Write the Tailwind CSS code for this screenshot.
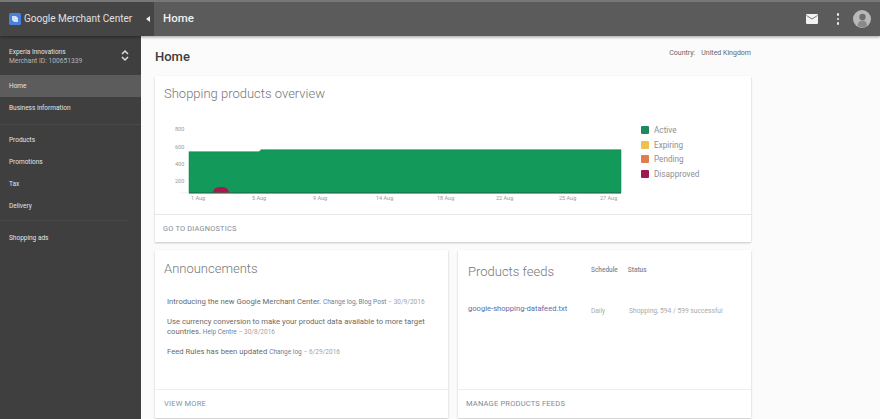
<!DOCTYPE html>
<html>
<head>
<meta charset="utf-8">
<script src="https://cdn.jsdelivr.net/npm/@tailwindcss/browser@4"></script>
</head>
<body class="m-0 bg-[#fbfbfb]">
<div class="w-[880px] h-[419px] overflow-hidden flex flex-col font-[Roboto,sans-serif] antialiased">
  <header class="h-[36px] shrink-0 flex items-center bg-[#5b5b5b] border-t-2 border-[#777] shadow-[0_1px_3px_rgba(0,0,0,0.4)] relative z-10">
    <div class="w-[154px] h-full flex items-center bg-[#454545] pl-[9px]">
      <svg class="w-[12px] h-[12px] shrink-0" viewBox="0 0 12 12"><rect width="12" height="12" rx="1.500" fill="#4a80d8"/><path d="M3 3h4l2 2v4H5L3 7z" fill="#cfe0fa"/></svg>
      <span class="ml-[3px] text-[10px] text-[#e0e0e0] whitespace-nowrap leading-none">Google Merchant Center</span>
      <svg class="w-[4px] h-[6px] ml-[14px] shrink-0" viewBox="0 0 4 6"><path d="M4 0v6L0 3z" fill="#eee"/></svg>
    </div>
    <span class="ml-[9px] text-[11.500px] font-medium text-[#f0f0f0]">Home</span>
    <div class="ml-auto flex items-center pr-[9px]">
      <svg class="w-[12px] h-[10px]" viewBox="0 0 12 10"><rect width="12" height="10" rx="1" fill="#f2f2f2"/><path d="M0.500 1.500 6 5l5.500-3.500" fill="none" stroke="#777" stroke-width="1"/></svg>
      <div class="ml-[19px] flex flex-col gap-[2px]">
        <div class="w-[2.500px] h-[2.500px] rounded-full bg-[#eee]"></div>
        <div class="w-[2.500px] h-[2.500px] rounded-full bg-[#eee]"></div>
        <div class="w-[2.500px] h-[2.500px] rounded-full bg-[#eee]"></div>
      </div>
      <svg class="ml-[14px] w-[18px] h-[18px]" viewBox="0 0 18 18"><circle cx="9" cy="9" r="9" fill="#b9b9b9"/><circle cx="9.500" cy="7" r="3.200" fill="#6e6e6e"/><path d="M4.500 16c.5-4 2.500-5.500 5-5.500s4.500 1.500 4.500 5.500a9 9 0 0 1-9.500 0z" fill="#8a8a8a"/></svg>
    </div>
  </header>
  <div class="flex flex-1 min-h-0">
    <aside class="w-[141px] shrink-0 bg-[#3f3f3f] text-[#e4e4e4] text-[6.500px] leading-none">
      <div class="h-[39px] pl-[9px] pr-[12px] flex items-center justify-between">
        <div class="flex flex-col gap-[3px] pt-[3px]">
          <span class="text-[6.500px]">Experia Innovations</span>
          <span class="text-[6.700px] text-[#b5b5b5]">Merchant ID: 100651339</span>
        </div>
        <svg class="w-[8px] h-[13px]" viewBox="0 0 8 13"><path d="M1 5l3-3 3 3M1 8l3 3 3-3" fill="none" stroke="#ddd" stroke-width="1.500"/></svg>
      </div>
      <div class="h-[22px] pl-[9px] flex items-center bg-[#5c5c5c]">Home</div>
      <div class="h-[22px] pl-[9px] flex items-center">Business information</div>
      <div class="mt-[5px] border-t border-[#4a4a4a] h-[5px]"></div>
      <div class="h-[22px] pl-[9px] flex items-center">Products</div>
      <div class="h-[22px] pl-[9px] flex items-center">Promotions</div>
      <div class="h-[22px] pl-[9px] flex items-center">Tax</div>
      <div class="h-[22px] pl-[9px] flex items-center">Delivery</div>
      <div class="mt-[3px] border-t border-[#4a4a4a] h-[7px] mr-[12px]"></div>
      <div class="h-[22px] pl-[9px] flex items-center">Shopping ads</div>
    </aside>
    <main class="w-[610px] pl-[14px] pr-0 min-w-0">
      <div class="w-[596px] h-[40px] flex items-center justify-between">
        <h1 class="text-[13px] font-medium text-[#3c3c3c] mt-[2px]">Home</h1>
        <div class="text-[7px] text-[#666] -mt-[6px]">Country:<span class="ml-[6px]">United Kingdom</span></div>
      </div>
      <section class="w-[596px] h-[166px] bg-white shadow-[0_1px_2px_rgba(0,0,0,0.22)] flex flex-col">
        <h2 class="pl-[9px] pt-[9px] h-[36px] text-[13px] leading-[17px] font-light text-[#777] shrink-0">Shopping products overview</h2>
        <div class="flex h-[102px] shrink-0">
          <svg class="w-[480px] h-[102px] shrink-0" viewBox="0 0 480 102">
            <g font-family="Roboto,sans-serif" font-size="5.500" fill="#999">
              <text x="20" y="19">800</text><text x="20" y="37">600</text><text x="20" y="54">400</text><text x="20" y="71">200</text>
              <text x="36" y="88">1 Aug</text><text x="97" y="88">5 Aug</text><text x="158" y="88">9 Aug</text><text x="221" y="88">14 Aug</text><text x="282" y="88">18 Aug</text><text x="341" y="88">22 Aug</text><text x="404" y="88">25 Aug</text><text x="445" y="88">27 Aug</text>
            </g>
            <path d="M25 81h9" stroke="#ddd" stroke-width="0.500"/>
            <path d="M34 81V39.700h70l2-2h360V81z" fill="#13995a" stroke="#0e7f4a" stroke-width="0.500"/>
            <path d="M34 81h432" stroke="#2a5c44" stroke-width="0.800"/>
            <path d="M58 80.500c1-5 4-5.500 8-5.500s7 .5 8 5.500z" fill="#a8194f"/>
          </svg>
          <ul class="ml-[6px] pt-[14px] flex flex-col gap-[6.500px] text-[8.200px] leading-[8px] text-[#8f8f8f]">
            <li class="flex items-center gap-[5px]"><span class="w-[8px] h-[8px] bg-[#1f8a5e] rounded-[1px]"></span>Active</li>
            <li class="flex items-center gap-[5px]"><span class="w-[8px] h-[8px] bg-[#eec04f] rounded-[1px]"></span>Expiring</li>
            <li class="flex items-center gap-[5px]"><span class="w-[8px] h-[8px] bg-[#e17c4f] rounded-[1px]"></span>Pending</li>
            <li class="flex items-center gap-[5px]"><span class="w-[8px] h-[8px] bg-[#9c1a50] rounded-[1px]"></span>Disapproved</li>
          </ul>
        </div>
        <div class="flex-1 border-t border-[#e6e6e6] pl-[8px] flex items-center text-[7.400px] text-[#858c96] tracking-[0.2px]">GO TO DIAGNOSTICS</div>
      </section>
      <div class="w-[596px] mt-[8px] flex gap-[10px]">
        <section class="w-[293px] h-[168px] bg-white shadow-[0_1px_2px_rgba(0,0,0,0.22)] flex flex-col">
          <h2 class="pl-[9px] pt-[10px] h-[40px] text-[13px] leading-[17px] font-light text-[#777] shrink-0">Announcements</h2>
          <div class="flex-1 pl-[12px] pr-[8px] text-[7.700px] leading-[10px] text-[#6a6a6a] pt-[7px] flex flex-col gap-[10px]">
            <p class="whitespace-nowrap">Introducing the new Google Merchant Center. <span class="text-[6.500px] text-[#6f7f9a]">Change log, Blog Post</span> <span class="text-[6.500px] text-[#a3a3a3]">− 30/9/2016</span></p>
            <p>Use currency conversion to make your product data available to more target countries. <span class="text-[6.500px] text-[#6f7f9a]">Help Centre</span> <span class="text-[6.500px] text-[#a3a3a3]">− 30/8/2016</span></p>
            <p class="whitespace-nowrap">Feed Rules has been updated <span class="text-[6.500px] text-[#6f7f9a]">Change log</span> <span class="text-[6.500px] text-[#a3a3a3]">− 6/29/2016</span></p>
          </div>
          <div class="h-[29px] shrink-0 border-t border-[#eee] pl-[9px] pb-[1px] flex items-center text-[7.500px] text-[#7d93a8] tracking-[0.2px]">VIEW MORE</div>
        </section>
        <section class="w-[293px] h-[168px] bg-white shadow-[0_1px_2px_rgba(0,0,0,0.22)] flex flex-col">
          <div class="h-[40px] shrink-0 pt-[13px] pl-[10px] flex items-start">
            <h2 class="w-[123px] text-[13px] leading-[17px] font-light text-[#777]">Products feeds</h2>
            <span class="text-[6.500px] font-medium text-[#888] mt-[3px]">Schedule</span>
            <span class="ml-[10px] text-[6.500px] font-medium text-[#888] mt-[3px]">Status</span>
          </div>
          <div class="flex-1 flex items-start pt-[14px] pl-[10px] whitespace-nowrap">
            <a class="w-[123px] text-[7.600px] leading-[10px] text-[#5a6ea8]">google-shopping-datafeed.txt</a>
            <span class="text-[6.500px] leading-[10px] text-[#aaa] mt-[2px]">Daily</span>
            <span class="ml-[24px] text-[6.700px] leading-[10px] text-[#aaa] mt-[2px]">Shopping, 594 / 599 successful</span>
          </div>
          <div class="h-[29px] shrink-0 border-t border-[#eee] pl-[8px] pb-[1px] flex items-center text-[7.500px] text-[#7d8b98] tracking-[0.2px]">MANAGE PRODUCTS FEEDS</div>
        </section>
      </div>
    </main>
  </div>
</div>
</body>
</html>
